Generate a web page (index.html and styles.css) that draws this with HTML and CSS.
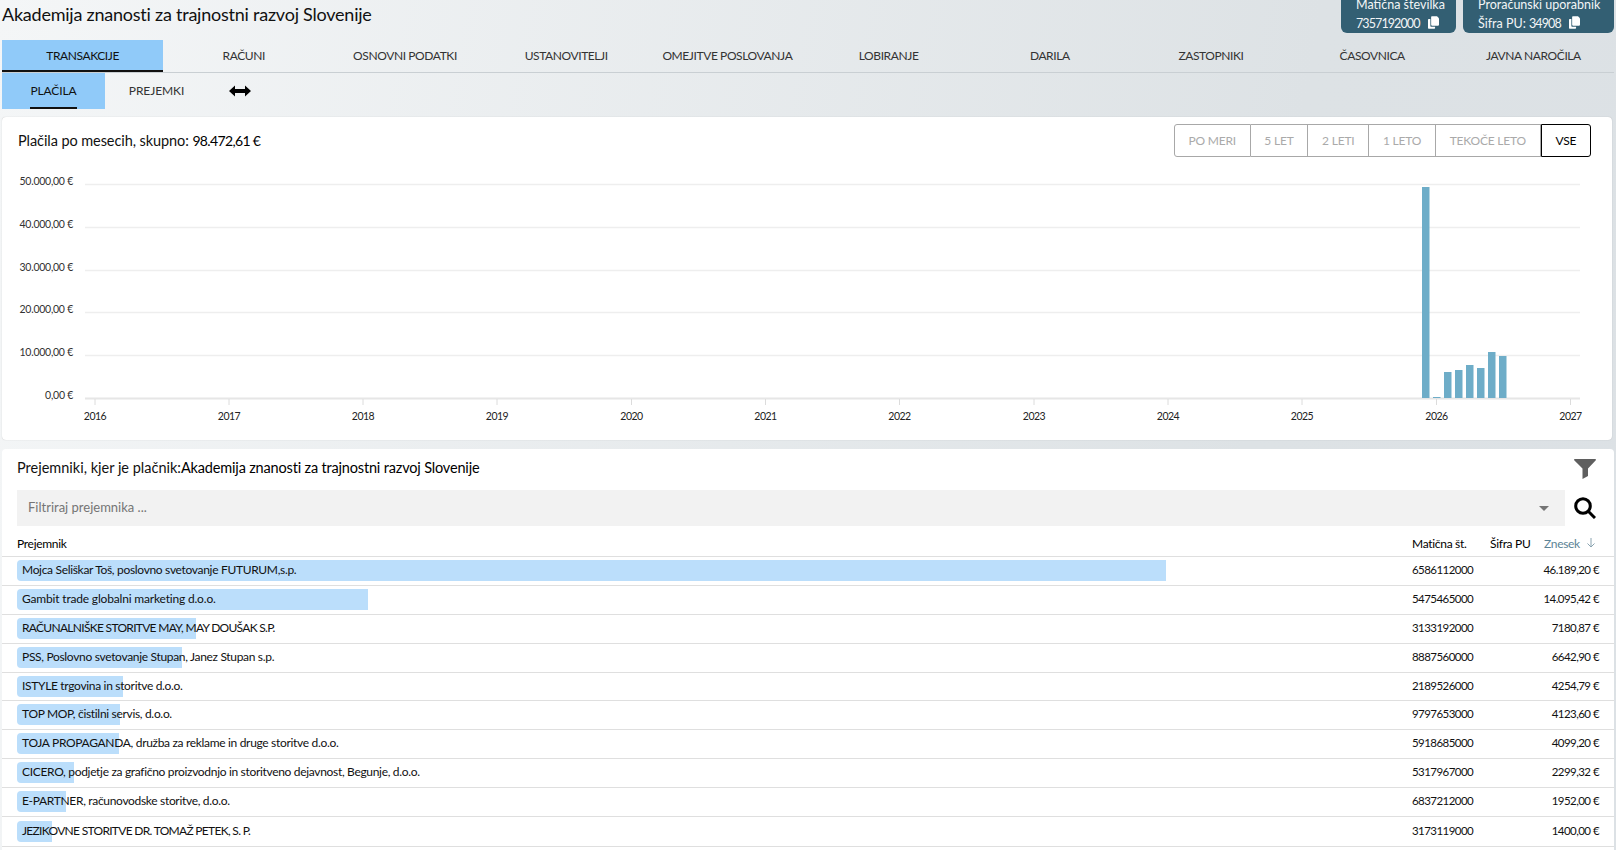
FILE: index.html
```html
<!DOCTYPE html>
<html lang="sl">
<head>
<meta charset="utf-8">
<title>Akademija znanosti za trajnostni razvoj Slovenije</title>
<link rel="stylesheet" href="styles.css">
</head>
<body>
<div class="page">
  <header class="top">
    <h1 class="title">Akademija znanosti za trajnostni razvoj Slovenije</h1>
    <div class="badges">
      <div class="badge badge-a">
        <div>Matična številka</div>
        <div class="badge-line"><span class="digits">7357192000</span> <svg class="copy" viewBox="0 0 14 16"><path d="M5 0h6.500L14 2.500V11a1 1 0 0 1-1 1H5a1 1 0 0 1-1-1V1a1 1 0 0 1 1-1z"/><path d="M0 4.500a1 1 0 0 1 1-1h2V12a1.500 1.500 0 0 0 1.500 1.500H9V15a1 1 0 0 1-1 1H1a1 1 0 0 1-1-1z"/></svg></div>
      </div>
      <div class="badge badge-b">
        <div>Proračunski uporabnik</div>
        <div class="badge-line"><span>Šifra PU: <span class="digits">34908</span></span> <svg class="copy" viewBox="0 0 14 16"><path d="M5 0h6.500L14 2.500V11a1 1 0 0 1-1 1H5a1 1 0 0 1-1-1V1a1 1 0 0 1 1-1z"/><path d="M0 4.500a1 1 0 0 1 1-1h2V12a1.500 1.500 0 0 0 1.500 1.500H9V15a1 1 0 0 1-1 1H1a1 1 0 0 1-1-1z"/></svg></div>
      </div>
    </div>
  </header>

  <nav class="tabs">
    <a class="tab tab-active">TRANSAKCIJE</a>
    <a class="tab">RAČUNI</a>
    <a class="tab">OSNOVNI PODATKI</a>
    <a class="tab">USTANOVITELJI</a>
    <a class="tab">OMEJITVE POSLOVANJA</a>
    <a class="tab">LOBIRANJE</a>
    <a class="tab">DARILA</a>
    <a class="tab">ZASTOPNIKI</a>
    <a class="tab">ČASOVNICA</a>
    <a class="tab">JAVNA NAROČILA</a>
  </nav>

  <nav class="subtabs">
    <a class="subtab subtab-active"><span class="subtab-label">PLAČILA</span></a>
    <a class="subtab"><span class="subtab-label">PREJEMKI</span></a>
    <svg class="swap" viewBox="0 0 22 12"><path d="M0 6l6-5.500V4h10V.500L22 6l-6 5.500V8H6v3.500z"/></svg>
  </nav>

  <section class="card card-chart">
    <div class="card-head">
      <div class="card-title">Plačila po mesecih, skupno: <span class="strong">98.472,61 €</span></div>
      <div class="range">
        <button class="range-btn">PO MERI</button>
        <button class="range-btn">5 LET</button>
        <button class="range-btn">2 LETI</button>
        <button class="range-btn">1 LETO</button>
        <button class="range-btn">TEKOČE LETO</button>
        <button class="range-btn range-on">VSE</button>
      </div>
    </div>
    <svg class="chart" viewBox="0 0 1610 280" width="1610" height="280">
      <g class="grid">
        <line x1="82" x2="1577" y1="24.500" y2="24.500"/>
        <line x1="82" x2="1577" y1="67.500" y2="67.500"/>
        <line x1="82" x2="1577" y1="110.500" y2="110.500"/>
        <line x1="82" x2="1577" y1="152.500" y2="152.500"/>
        <line x1="82" x2="1577" y1="195.500" y2="195.500"/>
        <line class="axis" x1="82" x2="1577" y1="238.500" y2="238.500"/>
      </g>
      <g class="ticks">
        <line x1="92" x2="92" y1="239" y2="245"/><line x1="226" x2="226" y1="239" y2="245"/>
        <line x1="360" x2="360" y1="239" y2="245"/><line x1="494" x2="494" y1="239" y2="245"/>
        <line x1="628.500" x2="628.500" y1="239" y2="245"/><line x1="762.500" x2="762.500" y1="239" y2="245"/>
        <line x1="896.500" x2="896.500" y1="239" y2="245"/><line x1="1031" x2="1031" y1="239" y2="245"/>
        <line x1="1165" x2="1165" y1="239" y2="245"/><line x1="1299" x2="1299" y1="239" y2="245"/>
        <line x1="1433.500" x2="1433.500" y1="239" y2="245"/><line x1="1567.500" x2="1567.500" y1="239" y2="245"/>
      </g>
      <g class="ylab">
        <text x="70" y="22">50.000,00 €</text>
        <text x="70" y="65">40.000,00 €</text>
        <text x="70" y="108">30.000,00 €</text>
        <text x="70" y="150">20.000,00 €</text>
        <text x="70" y="193">10.000,00 €</text>
        <text x="70" y="236">0,00 €</text>
      </g>
      <g class="xlab">
        <text x="92" y="260">2016</text><text x="226" y="260">2017</text><text x="360" y="260">2018</text>
        <text x="494" y="260">2019</text><text x="628.500" y="260">2020</text><text x="762.500" y="260">2021</text>
        <text x="896.500" y="260">2022</text><text x="1031" y="260">2023</text><text x="1165" y="260">2024</text>
        <text x="1299" y="260">2025</text><text x="1433.500" y="260">2026</text><text x="1567.500" y="260">2027</text>
      </g>
      <g class="bars">
        <rect x="1419" y="27" width="7.500" height="211"/>
        <rect x="1430" y="237" width="7.500" height="1"/>
        <rect x="1441" y="212" width="7.500" height="26"/>
        <rect x="1452" y="210" width="7.500" height="28"/>
        <rect x="1463" y="205" width="7.500" height="33"/>
        <rect x="1474" y="208" width="7.500" height="30"/>
        <rect x="1485" y="192" width="7.500" height="46"/>
        <rect x="1496" y="196" width="7.500" height="42"/>
      </g>
    </svg>
  </section>

  <section class="card card-list">
    <div class="list-head">
      <div class="list-title">Prejemniki, kjer je plačnik:<span class="list-name">Akademija znanosti za trajnostni razvoj Slovenije</span></div>
      <svg class="filter-icon" viewBox="0 0 22 20"><path d="M.800 0h20.400c.700 0 1 .800.600 1.300L14 9.500V17l-5.500 3V9.500L.200 1.300C-.200.800.100 0 .800 0z"/></svg>
    </div>
    <div class="search">
      <div class="select">
        <span class="placeholder">Filtriraj prejemnika ...</span>
        <span class="caret"></span>
      </div>
      <svg class="search-icon" viewBox="0 0 22 22"><circle cx="9" cy="9" r="7.300"/><path d="M14.500 14.500L21 21"/></svg>
    </div>
    <table class="table">
      <thead>
        <tr>
          <th class="col-name"><span class="cell-name">Prejemnik</span></th>
          <th class="col-mat">Matična št.</th>
          <th class="col-pu">Šifra PU</th>
          <th class="col-sum sorted">Znesek <svg class="sort" viewBox="0 0 10 10"><path d="M5 0v9M1.500 5.500L5 9l3.500-3.500"/></svg></th>
        </tr>
      </thead>
      <tbody>
        <tr><td class="col-name"><div class="name"><span class="bar" style="width:1149px"></span><span class="cell-name">Mojca Seliškar Toš, poslovno svetovanje FUTURUM,s.p.</span></div></td><td class="num">6586112000</td><td></td><td class="col-sum num">46.189,20 €</td></tr>
        <tr><td class="col-name"><div class="name"><span class="bar" style="width:351px"></span><span class="cell-name loose">Gambit trade globalni marketing d.o.o.</span></div></td><td class="num">5475465000</td><td></td><td class="col-sum num">14.095,42 €</td></tr>
        <tr><td class="col-name"><div class="name"><span class="bar" style="width:179px"></span><span class="cell-name tight">RAČUNALNIŠKE STORITVE MAY, MAY DOUŠAK S.P.</span></div></td><td class="num">3133192000</td><td></td><td class="col-sum num">7180,87 €</td></tr>
        <tr><td class="col-name"><div class="name"><span class="bar" style="width:165px"></span><span class="cell-name">PSS, Poslovno svetovanje Stupan, Janez Stupan s.p.</span></div></td><td class="num">8887560000</td><td></td><td class="col-sum num">6642,90 €</td></tr>
        <tr><td class="col-name"><div class="name"><span class="bar" style="width:106px"></span><span class="cell-name">ISTYLE trgovina in storitve d.o.o.</span></div></td><td class="num">2189526000</td><td></td><td class="col-sum num">4254,79 €</td></tr>
        <tr><td class="col-name"><div class="name"><span class="bar" style="width:103px"></span><span class="cell-name">TOP MOP, čistilni servis, d.o.o.</span></div></td><td class="num">9797653000</td><td></td><td class="col-sum num">4123,60 €</td></tr>
        <tr><td class="col-name"><div class="name"><span class="bar" style="width:102px"></span><span class="cell-name">TOJA PROPAGANDA, družba za reklame in druge storitve d.o.o.</span></div></td><td class="num">5918685000</td><td></td><td class="col-sum num">4099,20 €</td></tr>
        <tr><td class="col-name"><div class="name"><span class="bar" style="width:57px"></span><span class="cell-name">CICERO, podjetje za grafično proizvodnjo in storitveno dejavnost, Begunje, d.o.o.</span></div></td><td class="num">5317967000</td><td></td><td class="col-sum num">2299,32 €</td></tr>
        <tr><td class="col-name"><div class="name"><span class="bar" style="width:49px"></span><span class="cell-name">E-PARTNER, računovodske storitve, d.o.o.</span></div></td><td class="num">6837212000</td><td></td><td class="col-sum num">1952,00 €</td></tr>
        <tr><td class="col-name"><div class="name"><span class="bar" style="width:35px"></span><span class="cell-name tight">JEZIKOVNE STORITVE DR. TOMAŽ PETEK, S. P.</span></div></td><td class="num">3173119000</td><td></td><td class="col-sum num">1400,00 €</td></tr>
      </tbody>
    </table>
  </section>
</div>
</body>
</html>
```
FILE: styles.css
```css
* { box-sizing: border-box; }
html, body { margin: 0; height: 850px; overflow: hidden; }
body {
  font-family: Lato, "Noto Sans", sans-serif;
  color: #111;
  background: linear-gradient(100deg, #f4f6f7 0%, #dde2e5 75%, #dce1e5 100%);
}
.page { padding: 0 2px; }
.top { display: flex; justify-content: space-between; height: 40px; }
.title { margin: 0; font-size: 18px; line-height: 29px; font-weight: 400; color: #111; letter-spacing: -.23px; }
.badges { display: flex; gap: 7px; margin-top: -14px; height: 47px; }
.badge {
  background: #335f73; color: #f2f5f6; border-radius: 0 0 6px 6px; white-space: nowrap;
  font-size: 12.500px; line-height: 18px; padding: 10px 0 0 15px;
}
.badge-a { width: 115px; }
.badge-b { width: 151px; }
.badge-line { display: flex; align-items: center; gap: 8px; margin-top: 1px; }
.digits { letter-spacing: -.9px; }
.copy { width: 11px; height: 13px; fill: #fff; margin-top: -4px; }

.tabs { display: grid; grid-template-columns: repeat(10, 1fr); height: 33px; border-bottom: 1px solid #c9cfd3; }
.tab { display: flex; align-items: center; justify-content: center; font-size: 12px; letter-spacing: -.4px; color: #333; padding-bottom: 1px; }
.tab-active { background: #90caf9; color: #111; border-bottom: 2px solid #111; padding-bottom: 0; }

.subtabs { display: flex; align-items: stretch; height: 36px; }
.subtab { display: flex; justify-content: center; width: 103px; font-size: 12px; letter-spacing: -.1px; color: #333; }
.subtab-active { background: #90caf9; color: #111; }
.subtab-label { display: flex; align-items: center; height: 36px; border-bottom: 2px solid transparent; }
.subtab-active .subtab-label { border-bottom-color: #111; }
.swap { width: 22px; height: 12px; align-self: center; margin-left: 21px; margin-top: -1px; }

.card { background: #fff; border-radius: 4px; }
.card-chart { margin: 8px 2px 0 0; height: 323px; box-shadow: 0 0 1px rgba(0,0,0,.25); }
.card-head { display: flex; justify-content: space-between; align-items: flex-start; padding: 7px 21px 0 16px; height: 50px; }
.card-title { font-size: 14.500px; letter-spacing: -.08px; line-height: 33px; color: #111; }
.strong { color: #000; font-size: 14px; letter-spacing: -.65px; }
.range { display: flex; height: 33px; border-radius: 3px; }
.range-btn {
  font: inherit; font-size: 12px; letter-spacing: -.2px; color: #aaa; background: #fff; height: 33px;
  padding: 0 13.750px; border: 1px solid #a8a8a8; border-left-width: 0; white-space: nowrap;
}
.range-btn:first-child { border-left-width: 1px; border-radius: 3px 0 0 3px; }
.range-on { color: #000; border: 1px solid #000; border-radius: 0 3px 3px 0; }

.chart { display: block; margin-top: -7px; margin-left: 1px; }
.grid line { stroke: #eeeeee; stroke-width: 1.500; }
.grid .axis { stroke: #e6e6e6; stroke-width: 2; }
.ticks line { stroke: #dcdcdc; stroke-width: 1; }
.ylab text { font-size: 10.500px; letter-spacing: -.25px; text-anchor: end; fill: #333; dominant-baseline: middle; }
.xlab text { font-size: 10.500px; letter-spacing: -.5px; text-anchor: middle; fill: #222; }
.bars rect { fill: #6eadc8; }

.card-list { margin-top: 9px; height: 420px; }
.list-head { display: flex; justify-content: space-between; align-items: center; height: 41px; padding: 0 18px 5px 15px; }
.list-title { font-size: 14.500px; color: #111; }
.list-name { color: #000; letter-spacing: -.17px; }
.filter-icon { width: 22px; height: 20px; fill: #5f5f5f; margin-top: 3px; }
.search { display: flex; align-items: center; padding-left: 15px; }
.select {
  width: 1548px; height: 36px; background: #f2f2f2; display: flex; align-items: center;
  justify-content: space-between; padding: 0 16px 2px 11px; font-size: 13px; color: #757575;
}
.caret { width: 0; height: 0; margin-top: 2px; border-left: 5px solid transparent; border-right: 5px solid transparent; border-top: 5px solid #757575; }
.search-icon { width: 22px; height: 22px; margin-left: 9px; fill: none; stroke: #000; stroke-width: 3; }
.table { width: 100%; border-collapse: collapse; table-layout: fixed; font-size: 12px; }
.table th { height: 30px; font-weight: 400; text-align: left; color: #000; padding: 5px 0 0; letter-spacing: -.3px; border-bottom: 1px solid #dfdfdf; white-space: nowrap; }
.table td { height: 29px; padding: 0; color: #111; letter-spacing: -.32px; border-bottom: 1px solid #dfdfdf; white-space: nowrap; }
.table tbody tr:nth-child(5) td { height: 28px; }
.table tbody tr:last-child td { height: 30px; }
.col-name { width: 1410px; padding-left: 15px !important; }
.col-mat { width: 78px; }
.col-pu { width: 50px; }
.table .col-sum { text-align: right; padding-right: 15px; }
.table .sorted { color: #5b8396; text-align: left; padding-left: 4px; padding-right: 0; }
.table .num { font-size: 11.500px; letter-spacing: -.55px; padding-bottom: 2px; }
.sort { width: 10px; height: 10px; margin-left: 3px; fill: none; stroke: #8aa3b0; stroke-width: 1; }
.name { position: relative; height: 21px; line-height: 20px; }
.bar { position: absolute; left: 0; top: 0; height: 21px; background: #bbdefb; border-radius: 4px 0 0 4px; }
.cell-name { position: relative; }
td .cell-name { padding-left: 5px; }
td .tight { letter-spacing: -.7px; }
td .loose { letter-spacing: -.18px; }
```
